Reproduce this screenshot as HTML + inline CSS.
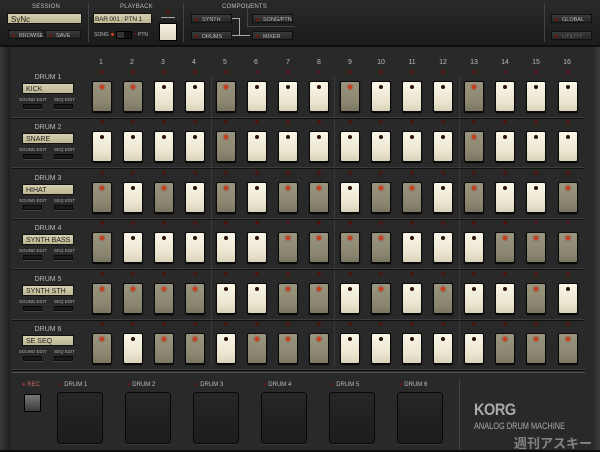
<!DOCTYPE html>
<html><head><meta charset="utf-8"><style>
*{margin:0;padding:0;box-sizing:border-box}
body{width:600px;height:450px;overflow:hidden;background:#0e0e0e;font-family:"Liberation Sans","Noto Sans CJK JP",sans-serif;position:relative}
.a{position:absolute}
.top{left:0;top:0;width:600px;height:45px;background:linear-gradient(#2a2a2a,#1b1b1b)}
.ttl{color:#bbb;font-size:6px;letter-spacing:0.2px}
.lcd{background:linear-gradient(#d4cfae,#bdb792);color:#222;font-size:8px;padding:1px 3px;border:1px solid #111;white-space:nowrap;overflow:hidden;line-height:9px}
.btn{background:linear-gradient(#3a3a3a,#262626);border:1px solid #111;color:#bbb;font-size:5.5px;padding:2px 0 0 10px}
.btn:before{content:"";position:absolute;left:3px;top:3px;width:3px;height:3px;border-radius:50%;background:#6a1a10}
.vd{width:1px;background:#444}
.panel{left:10px;top:47px;width:583px;height:403px;background:#292929}
.side{top:47px;height:403px;background:linear-gradient(90deg,#3a3a3a,#1e1e1e)}
.num{color:#bbb;font-size:7px;width:20px;text-align:center}
.led{width:4px;height:4px;border-radius:50%;background:#4a1510}
.sb{width:20px;height:31px;border-radius:2px;border:1px solid #0a0a0a;box-shadow:0 1px 1px #000}
.L{background:linear-gradient(#faf6e8,#ebe5cf 70%,#d8d2bb)}
.D{background:linear-gradient(#99957e,#8a8670 70%,#7a7662)}
.sb i{position:absolute;left:7px;top:3px;width:4px;height:4px;border-radius:50%;background:#2a1008}
.D i{background:#c8401c;box-shadow:0 0 2px #a00}
.dl{color:#bbb;font-size:7px;width:52px;text-align:center}
.el{color:#aaa;font-size:4.5px}
.eb{width:19px;height:5px;background:#1a1a1a;border:1px solid #0a0a0a;box-shadow:0 1px 0 #444}
.hs{height:2px;background:#3c3c3c;border-bottom:1px solid #111}
.pad{width:46px;height:52px;background:linear-gradient(#262626,#1c1c1c);border:1px solid #080808;border-radius:3px;box-shadow:0 1px 0 #3a3a3a}
.pl{color:#bbb;font-size:6px}
</style></head><body>
<div class="a top"></div>
<div class="a ttl" style="left:32px;top:4px">SESSION</div>
<div class="a lcd" style="left:7px;top:13px;width:75px;height:11px">SyNc</div>
<div class="a btn" style="left:8px;top:30px;width:35px;height:9px">BROWSE</div>
<div class="a btn" style="left:45px;top:30px;width:36px;height:9px">SAVE</div>
<div class="a vd" style="left:88px;top:4px;height:38px"></div>
<div class="a ttl" style="left:120px;top:4px">PLAYBACK</div>
<div class="a lcd" style="left:93px;top:13px;width:59px;height:11px;font-size:6.5px;padding:1px 1px;letter-spacing:-0.2px">BAR 001 : PTN 1</div>
<div class="a el" style="left:94px;top:32px;color:#bbb;font-size:5px">SONG</div>
<div class="a" style="left:111px;top:33px;width:3px;height:3px;border-radius:50%;background:#d4401c"></div>
<div class="a" style="left:116px;top:31px;width:16px;height:8px;background:#111;border:1px solid #000"><div class="a" style="left:0;top:0;width:7px;height:6px;background:#333"></div></div>
<div class="a" style="left:134px;top:33px;width:2px;height:2px;border-radius:50%;background:#6a1a10"></div>
<div class="a el" style="left:138px;top:32px;color:#bbb;font-size:5px">PTN</div>
<div class="a led" style="left:166px;top:10px"></div>
<div class="a" style="left:161px;top:17px;width:14px;height:1px;background:#aaa"></div>
<div class="a" style="left:159px;top:23px;width:18px;height:18px;background:linear-gradient(#f5f1e2,#ddd7c0);border:1px solid #000"></div>
<div class="a vd" style="left:183px;top:4px;height:38px"></div>
<div class="a ttl" style="left:222px;top:4px">COMPONENTS</div>
<div class="a btn" style="left:191px;top:14px;width:41px;height:9px">SYNTH</div>
<div class="a btn" style="left:191px;top:31px;width:41px;height:9px">DRUMS</div>
<div class="a btn" style="left:252px;top:14px;width:41px;height:9px">SONG/PTN</div>
<div class="a btn" style="left:252px;top:31px;width:41px;height:9px">MIXER</div>
<div class="a" style="left:232px;top:18px;width:8px;height:18px;border-top:1px solid #aaa;border-right:1px solid #aaa"></div>
<div class="a" style="left:232px;top:35px;width:18px;height:1px;background:#aaa"></div>
<div class="a" style="left:247px;top:4px;width:48px;height:23px;border-left:1px solid #444;border-bottom:1px solid #444"></div>
<div class="a vd" style="left:544px;top:4px;height:38px"></div>
<div class="a btn" style="left:551px;top:14px;width:41px;height:9px">GLOBAL</div>
<div class="a btn" style="left:551px;top:31px;width:41px;height:9px;color:#666">UTILITY</div>
<div class="a side" style="left:0;width:10px"></div>
<div class="a panel"></div>
<div class="a side" style="left:593px;width:7px;background:linear-gradient(90deg,#2a2a2a,#3c3c3c)"></div>
<div class="a vd" style="left:211px;top:76px;height:290px;background:#3a3a3a"></div>
<div class="a vd" style="left:334px;top:76px;height:290px;background:#3a3a3a"></div>
<div class="a vd" style="left:459px;top:76px;height:290px;background:#3a3a3a"></div>
<div class="a num" style="left:91px;top:59px">1</div><div class="a num" style="left:122px;top:59px">2</div><div class="a num" style="left:153px;top:59px">3</div><div class="a num" style="left:184px;top:59px">4</div><div class="a num" style="left:215px;top:59px">5</div><div class="a num" style="left:246px;top:59px">6</div><div class="a num" style="left:278px;top:59px">7</div><div class="a num" style="left:309px;top:59px">8</div><div class="a num" style="left:340px;top:59px">9</div><div class="a num" style="left:371px;top:59px">10</div><div class="a num" style="left:402px;top:59px">11</div><div class="a num" style="left:433px;top:59px">12</div><div class="a num" style="left:464px;top:59px">13</div><div class="a num" style="left:495px;top:59px">14</div><div class="a num" style="left:526px;top:59px">15</div><div class="a num" style="left:557px;top:59px">16</div>
<div id="g"></div>
<div class="a dl" style="left:22px;top:74px">DRUM 1</div><div class="a lcd" style="left:22px;top:83px;width:52px;height:11px;font-size:7px">KICK</div>
<div class="a dl" style="left:22px;top:124px">DRUM 2</div><div class="a lcd" style="left:22px;top:133px;width:52px;height:11px;font-size:7px">SNARE</div>
<div class="a dl" style="left:22px;top:175px">DRUM 3</div><div class="a lcd" style="left:22px;top:184px;width:52px;height:11px;font-size:7px">HIHAT</div>
<div class="a dl" style="left:22px;top:225px">DRUM 4</div><div class="a lcd" style="left:22px;top:234px;width:52px;height:11px;font-size:7px">SYNTH BASS</div>
<div class="a dl" style="left:22px;top:276px">DRUM 5</div><div class="a lcd" style="left:22px;top:285px;width:52px;height:11px;font-size:7px">SYNTH STH</div>
<div class="a dl" style="left:22px;top:326px">DRUM 6</div><div class="a lcd" style="left:22px;top:335px;width:52px;height:11px;font-size:7px">SE SEQ</div>
<div class="a el" style="left:19px;top:97px">SOUND EDIT</div><div class="a el" style="left:54px;top:97px">SEQ EDIT</div>
<div class="a el" style="left:19px;top:147px">SOUND EDIT</div><div class="a el" style="left:54px;top:147px">SEQ EDIT</div>
<div class="a el" style="left:19px;top:198px">SOUND EDIT</div><div class="a el" style="left:54px;top:198px">SEQ EDIT</div>
<div class="a el" style="left:19px;top:248px">SOUND EDIT</div><div class="a el" style="left:54px;top:248px">SEQ EDIT</div>
<div class="a el" style="left:19px;top:299px">SOUND EDIT</div><div class="a el" style="left:54px;top:299px">SEQ EDIT</div>
<div class="a el" style="left:19px;top:349px">SOUND EDIT</div><div class="a el" style="left:54px;top:349px">SEQ EDIT</div>
<div class="a" style="left:12px;top:372px;width:573px;height:1px;background:#555"></div>
<div class="a pl" style="left:22px;top:382px;color:#a33">● <span style="color:#c66">REC</span></div>
<div class="a" style="left:24px;top:394px;width:17px;height:18px;background:linear-gradient(#777,#3a3a3a);border:1px solid #000"></div>
<div class="a pl" style="left:59px;top:382px"><span style="color:#6a1a10">●</span> DRUM 1</div>
<div class="a pl" style="left:127px;top:382px"><span style="color:#6a1a10">●</span> DRUM 2</div>
<div class="a pl" style="left:195px;top:382px"><span style="color:#6a1a10">●</span> DRUM 3</div>
<div class="a pl" style="left:263px;top:382px"><span style="color:#6a1a10">●</span> DRUM 4</div>
<div class="a pl" style="left:331px;top:382px"><span style="color:#6a1a10">●</span> DRUM 5</div>
<div class="a pl" style="left:399px;top:382px"><span style="color:#6a1a10">●</span> DRUM 6</div>
<div class="a pad" style="left:57px;top:392px"></div><div class="a pad" style="left:125px;top:392px"></div><div class="a pad" style="left:193px;top:392px"></div><div class="a pad" style="left:261px;top:392px"></div><div class="a pad" style="left:329px;top:392px"></div><div class="a pad" style="left:397px;top:392px"></div>
<div class="a vd" style="left:459px;top:380px;height:70px;background:#444"></div>
<div class="a" style="left:474px;top:400px;color:#aaa;font-size:17px;font-weight:bold;transform:scaleX(0.85);transform-origin:left;letter-spacing:-0.5px">KORG</div>
<div class="a" style="left:474px;top:421px;color:#aaa;font-size:9px;transform:scaleX(0.82);transform-origin:left;white-space:nowrap">ANALOG DRUM MACHINE</div>
<div class="a" style="left:514px;top:433px;color:#999;font-size:13px;font-weight:bold;white-space:nowrap;opacity:.8">週刊アスキー</div>
<script>
var P=["DDLLDLLLDLLLDLLL","LLLLDLLLLLLLDLLL","DLDLDLDDLDDLDLLD","DLLLLLDDDDLLLDDD","DDDDLLDDLDLDLLDL","DLDDLDDDLLLLLDDD"];
var h="";
for(var r=0;r<6;r++){var y=81+r*50.4;
h+='<div class="a hs" style="left:12px;top:'+(y+36)+'px;width:573px"></div>';
h+='<div class="a eb" style="left:23px;top:'+(y+23)+'px"></div><div class="a eb" style="left:54px;top:'+(y+23)+'px"></div>';
for(var c=0;c<16;c++){var x=101.5+c*31.07;
h+='<div class="a led" style="left:'+(x-2)+'px;top:'+(y-11)+'px"></div>';
h+='<div class="a sb '+P[r][c]+'" style="left:'+(x-10)+'px;top:'+y+'px"><i></i></div>';}}
document.getElementById("g").innerHTML=h;
</script>
</body></html>
